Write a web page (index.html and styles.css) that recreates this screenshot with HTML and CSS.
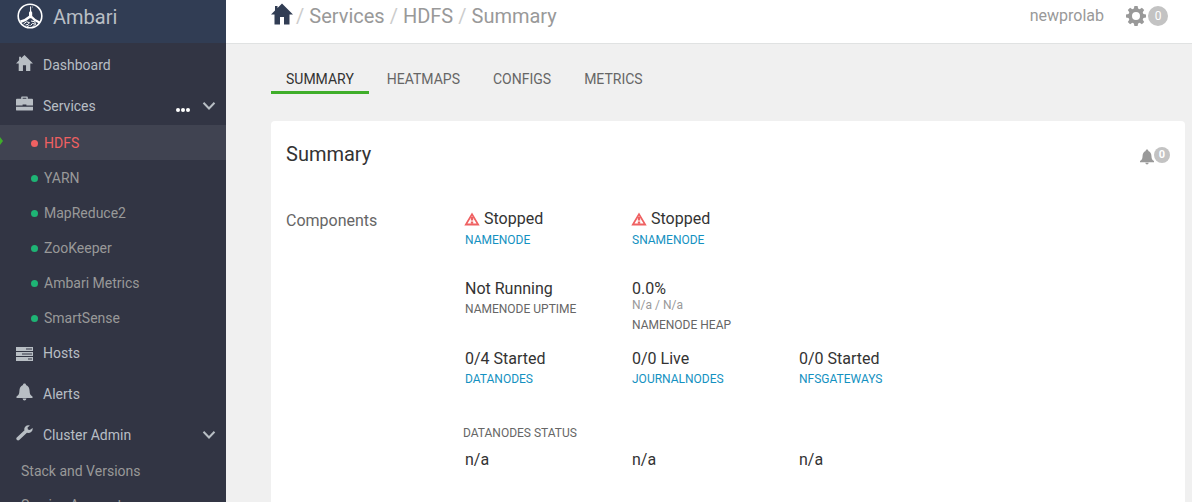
FILE: index.html
```html
<!DOCTYPE html>
<html lang="en">
<head>
<meta charset="utf-8">
<title>Ambari - HDFS Summary</title>
<meta name="viewport" content="width=device-width, initial-scale=1">
<link rel="stylesheet" href="styles.css">
</head>
<body>
<svg class="sprite" aria-hidden="true">
  <symbol id="home" viewBox="0 0 22 22"><path d="M11 0.5 L22 11.5 L18.5 11.5 V21.5 H13 V14 H9 V21.5 H3.5 V11.5 H0 L4 7.5 V3 H6.5 V5 Z"/></symbol>
  <symbol id="bell" viewBox="0 0 16 18"><path d="M8 0.5 C9 0.5 9.6 1.2 9.5 2 C12 3 13 5 13.1 8 C13.2 11 14 12.3 16 13.6 V15 H0 V13.6 C2 12.3 2.8 11 2.9 8 C3 5 4 3 6.5 2 C6.4 1.2 7 .5 8 .5 Z M6 15.6 H10 Q9.6 17.6 8 17.6 Q6.4 17.6 6 15.6 Z"/></symbol>
  <symbol id="chevron" viewBox="0 0 14 10"><path d="M1.5 1.8 L7 7.5 L12.5 1.8" fill="none" stroke="currentColor" stroke-width="2"/></symbol>
  <symbol id="warning" viewBox="0 0 16 14"><path fill-rule="evenodd" d="M8 .4 L15.7 13.6 H.3 Z M8 4 L3.5 11.6 H12.5 Z"/><path d="M6.8 5 H9.2 V8.5 H6.8 Z M6.8 9.6 H9.2 V11.8 H6.8 Z"/></symbol>
</svg>
<div class="app">
  <aside class="sidebar">
    <a class="brand" href="#">
      <svg class="logo" viewBox="0 0 26 26" fill="none" stroke="#fff">
        <circle cx="13" cy="13" r="11.8" stroke-width="1.6"/>
        <path d="M13.6 3.5 V9 M15 4 H15.6" stroke-width="1"/>
        <path d="M13.6 6 L14.4 8.5 L15.2 9.5 L15.2 13 Q18 16.5 23 18.5 L22 20.5 Q17 18.5 14.2 15.2 H12.8 Q9.5 18.5 4 20 L3 17.6 Q8.5 16 12 12.8 L12 9.5 L12.8 8.5 Z" fill="#fff" stroke="none"/>
        <path d="M6.5 21 L9.5 18.8 L12.5 19.6 L11 21.4 L8.5 22 M14 18 L17.8 18.8 L18.5 21.5 L15.5 20.3 L13.5 22.6 M10 23.6 L12.5 22.4 M15.5 23.5 L17.5 22.6" stroke-width="1"/>
      </svg>
      <span>Ambari</span>
    </a>
    <nav class="menu">
      <a class="item" href="#"><svg class="icon" fill="currentColor"><use href="#home"/></svg><span>Dashboard</span></a>
      <div class="item">
        <svg class="icon" viewBox="0 0 18 18" fill="currentColor"><path d="M5.5 3.5 V1.8 Q5.5 1 6.3 1 H11.7 Q12.5 1 12.5 1.8 V3.5 H17 Q18 3.5 18 4.5 V10.5 H11 V9.5 H7 V10.5 H0 V4.5 Q0 3.5 1 3.5 Z M7 3.5 H11 V2.4 H7 Z M0 12 H18 V15 Q18 16 17 16 H1 Q0 16 0 15 Z" fill-rule="evenodd"/></svg>
        <a href="#">Services</a>
        <button class="more" aria-label="Service actions"><i></i><i></i><i></i></button>
        <button class="toggle" aria-label="Toggle services"><svg><use href="#chevron"/></svg></button>
      </div>
      <ul class="services">
        <li class="active"><a href="#">HDFS</a></li>
        <li><a href="#">YARN</a></li>
        <li><a href="#">MapReduce2</a></li>
        <li><a href="#">ZooKeeper</a></li>
        <li><a href="#">Ambari Metrics</a></li>
        <li><a href="#">SmartSense</a></li>
      </ul>
      <a class="item" href="#"><svg class="icon low" viewBox="0 0 17 18" fill="currentColor"><path fill-rule="evenodd" d="M0 3 H17 V7 H0 Z M10 4.5 V5.5 H16 V4.5 Z M0 8 H17 V12 H0 Z M6 9.5 V10.5 H16 V9.5 Z M0 13 H17 V17 H0 Z M12 14.5 V15.5 H16 V14.5 Z"/></svg><span>Hosts</span></a>
      <a class="item" href="#"><svg class="icon" fill="currentColor"><use href="#bell"/></svg><span>Alerts</span></a>
      <div class="item">
        <svg class="icon" viewBox="0 0 18 18" fill="currentColor"><path d="M17.6 3.6 L14.6 5.8 L12.6 5.2 L12.2 3.3 L14.8 1 Q11.8 .2 10 2 Q8.2 3.8 9 6.2 L.8 13.8 Q-.2 15 .8 16.2 Q2.1 17.4 3.4 16.4 L11.6 8.8 Q14.4 9.4 16.3 7.7 Q18 6.2 17.6 3.6 Z"/></svg>
        <a href="#">Cluster Admin</a>
        <button class="toggle" aria-label="Toggle cluster admin"><svg><use href="#chevron"/></svg></button>
      </div>
      <ul class="admin">
        <li><a href="#">Stack and Versions</a></li>
        <li><a href="#">Service Accounts</a></li>
      </ul>
    </nav>
  </aside>
  <div class="content">
    <header class="topbar">
      <nav class="crumbs" aria-label="Breadcrumb">
        <a class="home" href="#" aria-label="Home"><svg><use href="#home"/></svg></a>
        <i>/</i><a href="#">Services</a><i>/</i><a href="#">HDFS</a><i>/</i><span>Summary</span>
      </nav>
      <div class="user">
        <a href="#">newprolab</a>
        <button class="operations" aria-label="Background operations">
          <svg viewBox="0 0 20 20"><path fill-rule="evenodd" d="M8.4 0 H11.6 L12.1 2.6 L13.7 3.3 L15.9 1.8 L18.2 4.1 L16.7 6.3 L17.4 7.9 L20 8.4 V11.6 L17.4 12.1 L16.7 13.7 L18.2 15.9 L15.9 18.2 L13.7 16.7 L12.1 17.4 L11.6 20 H8.4 L7.9 17.4 L6.3 16.7 L4.1 18.2 L1.8 15.9 L3.3 13.7 L2.6 12.1 L0 11.6 V8.4 L2.6 7.9 L3.3 6.3 L1.8 4.1 L4.1 1.8 L6.3 3.3 L7.9 2.6 Z M10 6 A4 4 0 1 0 10 14 A4 4 0 1 0 10 6 Z"/></svg>
          <span class="badge">0</span>
        </button>
      </div>
    </header>
    <main>
      <nav class="tabs">
        <a class="current" href="#">SUMMARY</a><a href="#">HEATMAPS</a><a href="#">CONFIGS</a><a href="#">METRICS</a>
      </nav>
      <section class="panel">
        <div class="panel-head">
          <h1>Summary</h1>
          <button class="alerts" aria-label="Alerts"><svg><use href="#bell"/></svg><span class="badge small">0</span></button>
        </div>
        <div class="panel-body">
          <h2>Components</h2>
          <div class="stats">
            <div class="stat state"><b><svg><use href="#warning"/></svg>Stopped</b><a href="#">NAMENODE</a></div>
            <div class="stat state"><b><svg><use href="#warning"/></svg>Stopped</b><a href="#">SNAMENODE</a></div>
            <div class="stat first"><b>Not Running</b><span>NAMENODE UPTIME</span></div>
            <div class="stat"><b>0.0%</b><small>N/a / N/a</small><span>NAMENODE HEAP</span></div>
            <div class="stat first"><b>0/4 Started</b><a href="#">DATANODES</a></div>
            <div class="stat"><b>0/0 Live</b><a href="#">JOURNALNODES</a></div>
            <div class="stat"><b>0/0 Started</b><a href="#">NFSGATEWAYS</a></div>
            <h3>DATANODES STATUS</h3>
            <div class="stat first"><b>n/a</b></div>
            <div class="stat"><b>n/a</b></div>
            <div class="stat"><b>n/a</b></div>
          </div>
        </div>
      </section>
    </main>
  </div>
</div>
</body>
</html>
```
FILE: styles.css
```css
* { box-sizing: border-box; }
body {
  margin: 0;
  font: 14px/20px Roboto, "Liberation Sans", sans-serif;
  color: #333;
  background: #f0f0f0;
}
a { color: inherit; text-decoration: none; }
button { border: 0; padding: 0; background: none; font: inherit; color: inherit; cursor: pointer; }
ul { list-style: none; margin: 0; padding: 0; }
i { font-style: normal; }
h1, h2, h3, b { margin: 0; font-weight: 400; }
svg { display: block; flex: none; }
.sprite { position: absolute; width: 0; height: 0; }

.app { display: flex; height: 100vh; overflow: hidden; }

.sidebar { flex: 0 0 226px; background: #323544; color: #b8bec4; overflow: hidden; }
.brand { display: flex; align-items: center; gap: 10px; height: 43px; padding: 0 17px 10px; background: #313d54; font-size: 20px; }
.logo { width: 26px; height: 26px; margin-bottom: 2px; }
.menu { padding-top: 1px; }
.item { display: flex; align-items: center; height: 41px; padding: 0 10px 0 16px; }
.icon { width: 17px; height: 18px; margin: 0 10px 3px 0; }
.icon.low { margin-bottom: 0; }
.more { display: flex; gap: 1px; margin: 8px 12px 0 auto; }
.more i { width: 4px; height: 4px; border-radius: 2px; background: #fff; }
.toggle svg { width: 14px; height: 10px; }
.item > a + .toggle { margin-left: auto; }

.services { margin: -1px 0 -3px; color: #999; }
.services li { position: relative; height: 35px; padding-left: 31px; display: flex; align-items: center; }
.services a { display: flex; align-items: center; gap: 6px; }
.services a::before { content: ""; width: 7px; height: 7px; margin-top: 1px; border-radius: 50%; background: #1eb475; }
.services .active { background: #404351; color: #ef6162; }
.services .active a::before { background: #ef6162; }
.services .active::before {
  content: "";
  position: absolute;
  top: 12px;
  left: 0;
  border: solid transparent;
  border-width: 4px 0 4px 3px;
  border-left-color: #3fae2a;
}
.admin { color: #999; }
.admin li { height: 34px; padding: 6px 21px; }

.content { flex: 1; min-width: 0; }
.topbar { display: flex; justify-content: space-between; align-items: center; height: 44px; padding: 0 24px 11px 45px; background: #fff; border-bottom: 1px solid #e0e2e2; color: #999; }
.crumbs { display: flex; align-items: center; gap: 5px; font-size: 20px; }
.crumbs i { color: #ccc; }
.home { margin-right: -2px; }
.home svg { width: 22px; height: 22px; margin-bottom: 4px; fill: #313d54; }
.user { display: flex; align-items: center; gap: 22px; font-size: 16px; }
.operations { display: flex; align-items: center; gap: 2px; }
.operations svg { width: 20px; height: 20px; fill: #999; }
.badge { width: 20px; height: 20px; border-radius: 50%; background: #c3c3c3; color: #fff; font-size: 12px; line-height: 20px; text-align: center; }
.small { width: 16px; height: 16px; font-size: 11px; line-height: 16px; font-weight: 700; }

main { padding: 20px 7px 0 45px; }
.tabs { display: flex; gap: 1px; color: #666; }
.tabs a { padding: 5px 16px 2px; height: 30px; border-bottom: 3px solid transparent; }
.tabs .current { padding: 5px 15px 2px; margin-right: 1px; border-color: #3fae2a; color: #333; }

.panel { min-height: 420px; margin-top: 27px; padding: 20px 15px; background: #fff; border-radius: 4px; }
.panel-head { display: flex; justify-content: space-between; align-items: center; }
.panel h1 { font-size: 20px; line-height: 26px; }
.alerts { display: flex; align-items: center; margin-top: 2px; }
.alerts svg { width: 14px; height: 16px; margin-top: 3px; fill: #999; }
.panel-body { display: grid; grid-template-columns: 177px 1fr; margin-top: 41px; }
.panel h2 { padding-top: 3px; font-size: 16px; line-height: 20px; color: #666; }
.stats { display: grid; grid-template-columns: repeat(3, 167px); grid-template-rows: 70px 70px 76px 25px auto; }
.stat { display: flex; flex-direction: column; padding-left: 2px; font-size: 12px; }
.stat b { display: flex; font-size: 16px; line-height: 22px; }
.stat svg { width: 16px; height: 14px; margin: 4px 4px 0 -1px; fill: #ef6162; }
.stat a, .stat span { line-height: 18px; }
.stat a { color: #1491c1; }
.stat span { color: #666; }
.stat.state a { margin-top: 1px; }
.stat small { margin: -1px 0 5px; font-size: 12px; line-height: 12px; color: #999; }
.first { grid-column: 1; }
.stats h3 { grid-column: 1 / -1; font-size: 12px; line-height: 18px; color: #666; }
```
